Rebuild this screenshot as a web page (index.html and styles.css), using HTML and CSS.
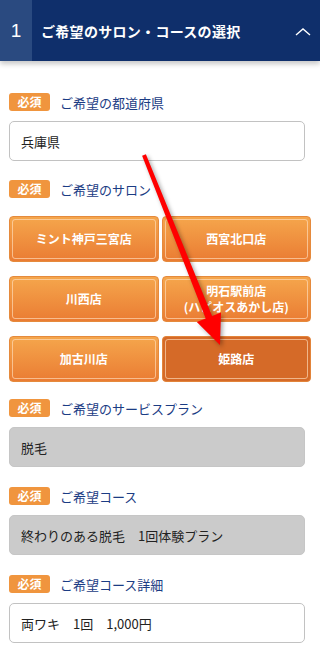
FILE: index.html
```html
<!DOCTYPE html>
<html lang="ja">
<head>
  <meta charset="UTF-8" />
  <meta name="viewport" content="width=device-width, initial-scale=1.0"/>
  <title>ご希望のサロン・コースの選択</title>
  <link rel="stylesheet" href="styles.css">
</head>
<body>
  <div class="step-head">
    <div class="step-num">1</div>
    <div class="step-title">ご希望のサロン・コースの選択</div>
    <svg class="step-toggle" width="18" height="10" viewBox="0 0 18 10">
      <polyline points="2,8 9,2 16,8" fill="none" stroke="#fff" stroke-width="1.4"/>
    </svg>
  </div>

  <div class="form">
    <div class="field first">
      <div class="label"><span class="req">必須</span>ご希望の都道府県</div>
      <div class="box">兵庫県</div>
    </div>

    <div class="field salon-field">
      <div class="label"><span class="req">必須</span>ご希望のサロン</div>
      <div class="salons">
        <button class="salon">ミント神戸三宮店</button>
        <button class="salon">西宮北口店</button>
        <button class="salon">川西店</button>
        <button class="salon">明石駅前店<br>(ハピオスあかし店)</button>
        <button class="salon">加古川店</button>
        <button class="salon selected">姫路店</button>
      </div>
    </div>

    <div class="field">
      <div class="label"><span class="req">必須</span>ご希望のサービスプラン</div>
      <div class="box locked">脱毛</div>
    </div>

    <div class="field">
      <div class="label"><span class="req">必須</span>ご希望コース</div>
      <div class="box locked">終わりのある脱毛　1回体験プラン</div>
    </div>

    <div class="field">
      <div class="label"><span class="req">必須</span>ご希望コース詳細</div>
      <div class="box">両ワキ　1回　1,000円</div>
    </div>
  </div>

  <!-- annotation arrow -->
  <svg class="arrow" width="320" height="651" viewBox="0 0 320 651">
    <polygon points="142.1,155.7 145.9,154.3 212.1,315.9 221,312.4 220,345 196.8,322 205.7,318.5" fill="#ff0000"/>
  </svg>
</body>
</html>
```

FILE: styles.css
```css
body {
  margin: 0;
  background: #fff;
  font-family: "Noto Sans CJK JP", "Liberation Sans", sans-serif;
  position: relative;
  width: 320px;
  min-height: 651px;
  overflow: hidden;
}
.step-head {
  display: flex;
  align-items: center;
  height: 61px;
  background: #0f2f6b;
  color: #fff;
  box-shadow: 0 3px 5px rgba(0,0,0,0.22);
}
.step-num {
  width: 32px;
  height: 100%;
  background: #2a4a80;
  display: flex;
  align-items: center;
  justify-content: center;
  font-size: 19px;
  font-family: "Liberation Sans", sans-serif;
}
.step-title {
  flex: 1;
  padding-left: 9px;
  font-size: 14px;
  font-weight: bold;
  letter-spacing: 0.3px;
}
.step-toggle {
  margin-right: 8px;
  margin-top: 2px;
}
.form {
  padding: 32px 12px 0 9px;
}
.field {
  margin-bottom: 20px;
}
.field.first {
  margin-bottom: 19px;
}
.field.salon-field {
  margin-bottom: 17px;
}
.label {
  display: flex;
  align-items: center;
  height: 18px;
  font-size: 13px;
  color: #1b3c84;
  margin-bottom: 10px;
}
.req {
  display: inline-block;
  width: 41px;
  height: 18px;
  line-height: 18px;
  margin-right: 10px;
  text-align: center;
  background: #f0953e;
  color: #fff;
  font-size: 12px;
  font-weight: bold;
  border-radius: 3px;
}
.box {
  box-sizing: border-box;
  height: 40px;
  display: flex;
  align-items: center;
  padding-left: 11px;
  border: 1px solid #c2c2c2;
  border-radius: 5px;
  font-size: 13px;
  color: #222;
  margin-right: 3px;
}
.box.locked {
  background: #cbcbcb;
  border-color: #c6c6c6;
}
.salons {
  display: grid;
  grid-template-columns: 1fr 1fr;
  column-gap: 3px;
  row-gap: 14px;
  margin-top: 18px;
  margin-right: -3px;
}
.salon {
  position: relative;
  height: 46px;
  padding: 0;
  border: 1px solid #e58a3d;
  border-radius: 4px;
  background: linear-gradient(#f5a64c, #ea7c33);
  color: #fff;
  font-family: inherit;
  font-size: 12px;
  font-weight: bold;
  line-height: 16px;
  cursor: pointer;
}
.salon::before {
  content: "";
  position: absolute;
  top: 2px;
  left: 2px;
  right: 2px;
  bottom: 2px;
  border: 1px solid rgba(255, 222, 190, 0.65);
  border-radius: 3px;
}
.salon.selected {
  background: #d56a28;
  border-color: #e2843a;
}
.arrow {
  position: absolute;
  top: 0;
  left: 0;
  pointer-events: none;
  filter: drop-shadow(2px 2px 2px rgba(0,0,0,0.35));
}
```
